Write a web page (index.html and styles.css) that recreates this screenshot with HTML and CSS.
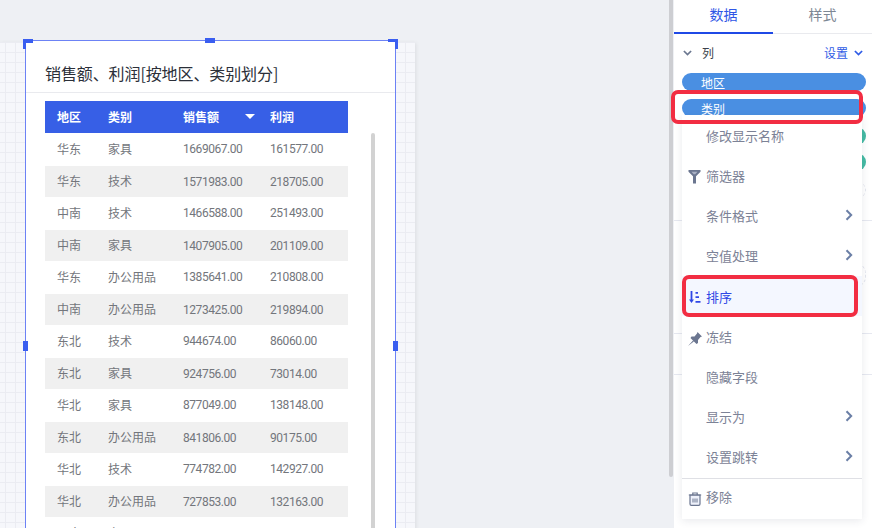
FILE: index.html
```html
<!DOCTYPE html>
<html lang="zh">
<head>
<meta charset="utf-8">
<title>销售额、利润</title>
<link rel="stylesheet" href="styles.css">
</head>
<body>
<div class="app">
  <main class="canvas">
    <div class="sheet">
      <section class="widget">
        <span class="handle tl"></span><span class="handle tm"></span><span class="handle tr"></span>
        <span class="handle ml"></span><span class="handle mr"></span>
        <h1 class="title">销售额、利润[按地区、类别划分]</h1>
        <div class="table-wrap">
          <div class="row head">
            <span class="c1">地区</span><span class="c2">类别</span>
            <span class="c3">销售额<i class="sort"></i></span><span class="c4">利润</span>
          </div>
          <div class="row"><span class="c1">华东</span><span class="c2">家具</span><span class="c3 num">1669067.00</span><span class="c4 num">161577.00</span></div>
          <div class="row alt"><span class="c1">华东</span><span class="c2">技术</span><span class="c3 num">1571983.00</span><span class="c4 num">218705.00</span></div>
          <div class="row"><span class="c1">中南</span><span class="c2">技术</span><span class="c3 num">1466588.00</span><span class="c4 num">251493.00</span></div>
          <div class="row alt"><span class="c1">中南</span><span class="c2">家具</span><span class="c3 num">1407905.00</span><span class="c4 num">201109.00</span></div>
          <div class="row"><span class="c1">华东</span><span class="c2">办公用品</span><span class="c3 num">1385641.00</span><span class="c4 num">210808.00</span></div>
          <div class="row alt"><span class="c1">中南</span><span class="c2">办公用品</span><span class="c3 num">1273425.00</span><span class="c4 num">219894.00</span></div>
          <div class="row"><span class="c1">东北</span><span class="c2">技术</span><span class="c3 num">944674.00</span><span class="c4 num">86060.00</span></div>
          <div class="row alt"><span class="c1">东北</span><span class="c2">家具</span><span class="c3 num">924756.00</span><span class="c4 num">73014.00</span></div>
          <div class="row"><span class="c1">华北</span><span class="c2">家具</span><span class="c3 num">877049.00</span><span class="c4 num">138148.00</span></div>
          <div class="row alt"><span class="c1">东北</span><span class="c2">办公用品</span><span class="c3 num">841806.00</span><span class="c4 num">90175.00</span></div>
          <div class="row"><span class="c1">华北</span><span class="c2">技术</span><span class="c3 num">774782.00</span><span class="c4 num">142927.00</span></div>
          <div class="row alt"><span class="c1">华北</span><span class="c2">办公用品</span><span class="c3 num">727853.00</span><span class="c4 num">132163.00</span></div>
          <div class="row"><span class="c1">西南</span><span class="c2">家具</span></div>
          <div class="vbar"></div>
        </div>
      </section>
    </div>
  </main>
  <div class="scroll-track"><div class="scroll-thumb"></div></div>
  <aside class="panel">
    <nav class="tabs"><span class="tab active">数据</span><span class="tab">样式</span></nav>
    <div class="col-head">
      <svg class="chev" viewBox="0 0 10 6"><path d="M1 .8l4 4 4-4" fill="none" stroke="#6b7790" stroke-width="1.900"/></svg>
      <span class="col-label">列</span>
      <span class="setting">设置<svg class="chev" viewBox="0 0 10 6"><path d="M1 .8l4 4 4-4" fill="none" stroke="#2f5ce6" stroke-width="1.900"/></svg></span>
    </div>
    <div class="pills">
      <div class="pill blue">地区</div>
      <div class="pill blue">类别</div>
      <div class="pill green"></div>
      <div class="pill green"></div>
    </div>
    <div class="divider d1"></div>
    <div class="divider d2"></div>
    <div class="divider d3"></div>
    <div class="ghost g1"></div>
    <div class="ghost g2"></div>
    <div class="menu">
      <div class="item">修改显示名称</div>
      <div class="item"><svg class="ico funnel" viewBox="0 0 14 14"><path d="M.5 0h12v1.800L8 6.200V13.500H5V6.200L.5 1.800z" fill="#6b7690"/><path d="M3.500 1.800h6L7.300 4.200H5.700z" fill="#a9b0c4"/></svg>筛选器</div>
      <div class="item">条件格式<svg class="arrow" viewBox="0 0 8 12"><path d="M1.500 1.200L6.200 6l-4.700 4.800" fill="none" stroke="#6b7fa6" stroke-width="2"/></svg></div>
      <div class="item">空值处理<svg class="arrow" viewBox="0 0 8 12"><path d="M1.500 1.200L6.200 6l-4.700 4.800" fill="none" stroke="#6b7fa6" stroke-width="2"/></svg></div>
      <div class="item hot"><svg class="ico sorter" viewBox="0 0 14 14"><path d="M3.500 0v10" fill="none" stroke="#2f47e6" stroke-width="1.800"/><path d="M1 8.500h5L3.500 12z" fill="#2f47e6"/><path d="M7.500 1h2.500v1.800H7.500zM7.500 5.200h3.500V7H7.500zM7.500 10h5v1.800H7.500z" fill="#2f47e6"/></svg>排序</div>
      <div class="item"><svg class="ico pin" viewBox="0 0 14 14"><path d="M9.500 0L14 4.500 12.500 5 10 8v3l-1.500 1-6-6 1-1.500h3L9 1.500zM5 8.500L0 14l5.800-4.500z" fill="#6b7690"/></svg>冻结</div>
      <div class="item">隐藏字段</div>
      <div class="item">显示为<svg class="arrow" viewBox="0 0 8 12"><path d="M1.500 1.200L6.200 6l-4.700 4.800" fill="none" stroke="#6b7fa6" stroke-width="2"/></svg></div>
      <div class="item">设置跳转<svg class="arrow" viewBox="0 0 8 12"><path d="M1.500 1.200L6.200 6l-4.700 4.800" fill="none" stroke="#6b7fa6" stroke-width="2"/></svg></div>
      <div class="item removal"><svg class="ico" viewBox="0 0 14 14"><path d="M.8 3h12.400M4.800 3V1h4.400v2" fill="none" stroke="#6b7690" stroke-width="1.200"/><path d="M2 3.200h10V12a1.300 1.300 0 0 1-1.300 1.300H3.300A1.300 1.300 0 0 1 2 12z" fill="#eef1fa" stroke="#6b7690" stroke-width="1.200"/><path d="M5 6.500v4M7 6.500v4M9 6.500v4" stroke="#6b7690" stroke-width="1"/></svg>移除</div>
    </div>
    <div class="mark m1"></div>
    <div class="mark m2"></div>
  </aside>
</div>
</body>
</html>
```

FILE: styles.css
```css
* { box-sizing: border-box; }
html, body { margin: 0; height: 100%; }
body { font-family: "Noto Sans CJK SC", "Noto Sans", sans-serif; overflow: hidden; background: #eef0f4; }
.app { display: flex; width: 872px; height: 528px; overflow: hidden; }
.canvas { width: 669px; height: 528px; flex: none; padding-top: 42px; overflow: hidden; }
.sheet {
  width: 415px; height: 600px; padding-left: 25px;
  background-color: #f6f7fb;
  background-image: linear-gradient(#ebecf2 1px, transparent 1px), linear-gradient(90deg, #ebecf2 1px, transparent 1px);
  background-size: 10px 10px;
  background-position: 5px 0;
  box-shadow: 1px 1px 4px rgba(0,0,0,.08);
}
.widget {
  position: relative; width: 371px; height: 560px; transform: translateY(-2px);
  background: #fff; border: 1px solid #6c82f5; padding-top: 21px;
}
.handle { position: absolute; background: #3a5ef0; }
.tl { left: -3px; top: -2px; width: 10px; height: 10px; clip-path: polygon(0 0,100% 0,100% 40%,30% 40%,30% 100%,0 100%); }
.tr { right: -3px; top: -2px; width: 10px; height: 10px; clip-path: polygon(0 0,100% 0,100% 100%,70% 100%,70% 30%,0 30%); }
.tm { left: 179px; top: -3px; width: 10px; height: 5px; }
.ml { left: -3px; top: 300px; width: 5px; height: 10px; }
.mr { right: -3px; top: 300px; width: 5px; height: 10px; }
.title {
  margin: 0; padding-left: 19px; height: 31px; line-height: 23px; letter-spacing: -.1px;
  font-size: 16px; font-weight: 400; color: #2b2f38;
  border-bottom: 1px solid #e9eaee;
}
.table-wrap { position: relative; margin: 8px 0 0 19px; width: 303px; }
.row { display: flex; height: 32px; align-items: center; font-size: 12px; color: #73767c; padding-bottom: 2px; }
.row.alt { background: #f0f0f0; border-top: 1px solid #fff; }
.row.head { background: #375fe6; color: #fff; font-weight: 700; }
.row span { display: flex; align-items: center; }
.c1 { width: 63px; padding-left: 12px; flex: none; }
.c2 { width: 75px; flex: none; }
.c3 { width: 87px; flex: none; position: relative; }
.c4 { flex: 1; }
.row .num { font-family: Roboto, sans-serif; font-size: 12px; letter-spacing: -.45px; padding-top: 2px; }
.sort { position: absolute; left: 62px; top: 50%; margin-top: -2.500px; width: 0; height: 0; border: 5.500px solid transparent; border-top: 5.500px solid #fff; border-bottom: 0; }
.vbar { position: absolute; left: 326px; top: 32px; width: 4px; height: 420px; background: #d2d2d2; border-radius: 2px 2px 0 0; }
.scroll-track { width: 5px; flex: none; background: #eef0f4; }
.scroll-thumb { width: 4px; height: 477px; background: #cdced2; border-radius: 0 0 2px 2px; }
.panel { position: relative; width: 198px; height: 528px; flex: none; background: #fff; }
.tabs { display: flex; height: 34px; border-bottom: 1px solid #e9eaee; }
.tab { width: 100px; height: 34px; text-align: center; line-height: 29px; font-size: 14px; color: #7d8794; }
.tab.active { color: #2f56e6; border-bottom: 2px solid #1f49e6; }
.col-head { display: flex; align-items: center; height: 39px; padding: 0 9px 2px 9px; font-size: 12px; color: #3a3f4a; }
.chev { width: 9px; height: 6px; }
.col-label { margin-left: 10px; flex: 1; }
.setting { color: #2f5ce6; display: flex; align-items: center; gap: 6px; }
.pills { padding-left: 8px; }
.pill { width: 184px; height: 18px; border-radius: 9px; margin-bottom: 8px; font-size: 12px; line-height: 20px; color: #fff; padding-left: 19px; }
.pill.blue { background: #4a8fe2; }
.pill.green { background: #45bba4; }
.pill.blue + .pill.green { margin-top: 10px; }
.divider { position: absolute; left: 0; right: 0; height: 1px; background: #e6e8f0; }
.d1 { top: 220px; }
.d2 { top: 333px; }
.d3 { top: 374px; }
.ghost { position: absolute; left: 180px; width: 12px; border: 1px dashed #e4e6ee; border-radius: 0 10px 10px 0; }
.g1 { top: 181px; height: 18px; }
.g2 { top: 263px; height: 24px; }
.menu {
  position: absolute; left: 8px; top: 115px; width: 180px; height: 404px;
  background: #fff; box-shadow: 0 2px 8px rgba(40,50,80,.1);
}
.item {
  position: relative; height: 40px; padding-left: 24px; display: flex; align-items: center;
  font-size: 13px; color: #7c8296;
}
.item.hot { color: #2f47e6; background: #f4f7ff; margin-top: 1px; }
.item.removal { border-top: 1px solid #dfe0e5; height: 41px; margin-top: 2px; padding-bottom: 5px; }
.ico { position: absolute; left: 6px; top: 13px; width: 14px; height: 14px; }
.funnel { top: 15px; }
.sorter { top: 15px; }
.pin { top: 16px; }
.arrow { position: absolute; left: 163px; top: 14px; width: 8px; height: 12px; }
.mark { position: absolute; border: 4px solid #f22d42; border-radius: 7px; pointer-events: none; }
.m1 { left: -3px; top: 90px; width: 192px; height: 34px; }
.m2 { left: 8px; top: 275px; width: 176px; height: 42px; }
```
